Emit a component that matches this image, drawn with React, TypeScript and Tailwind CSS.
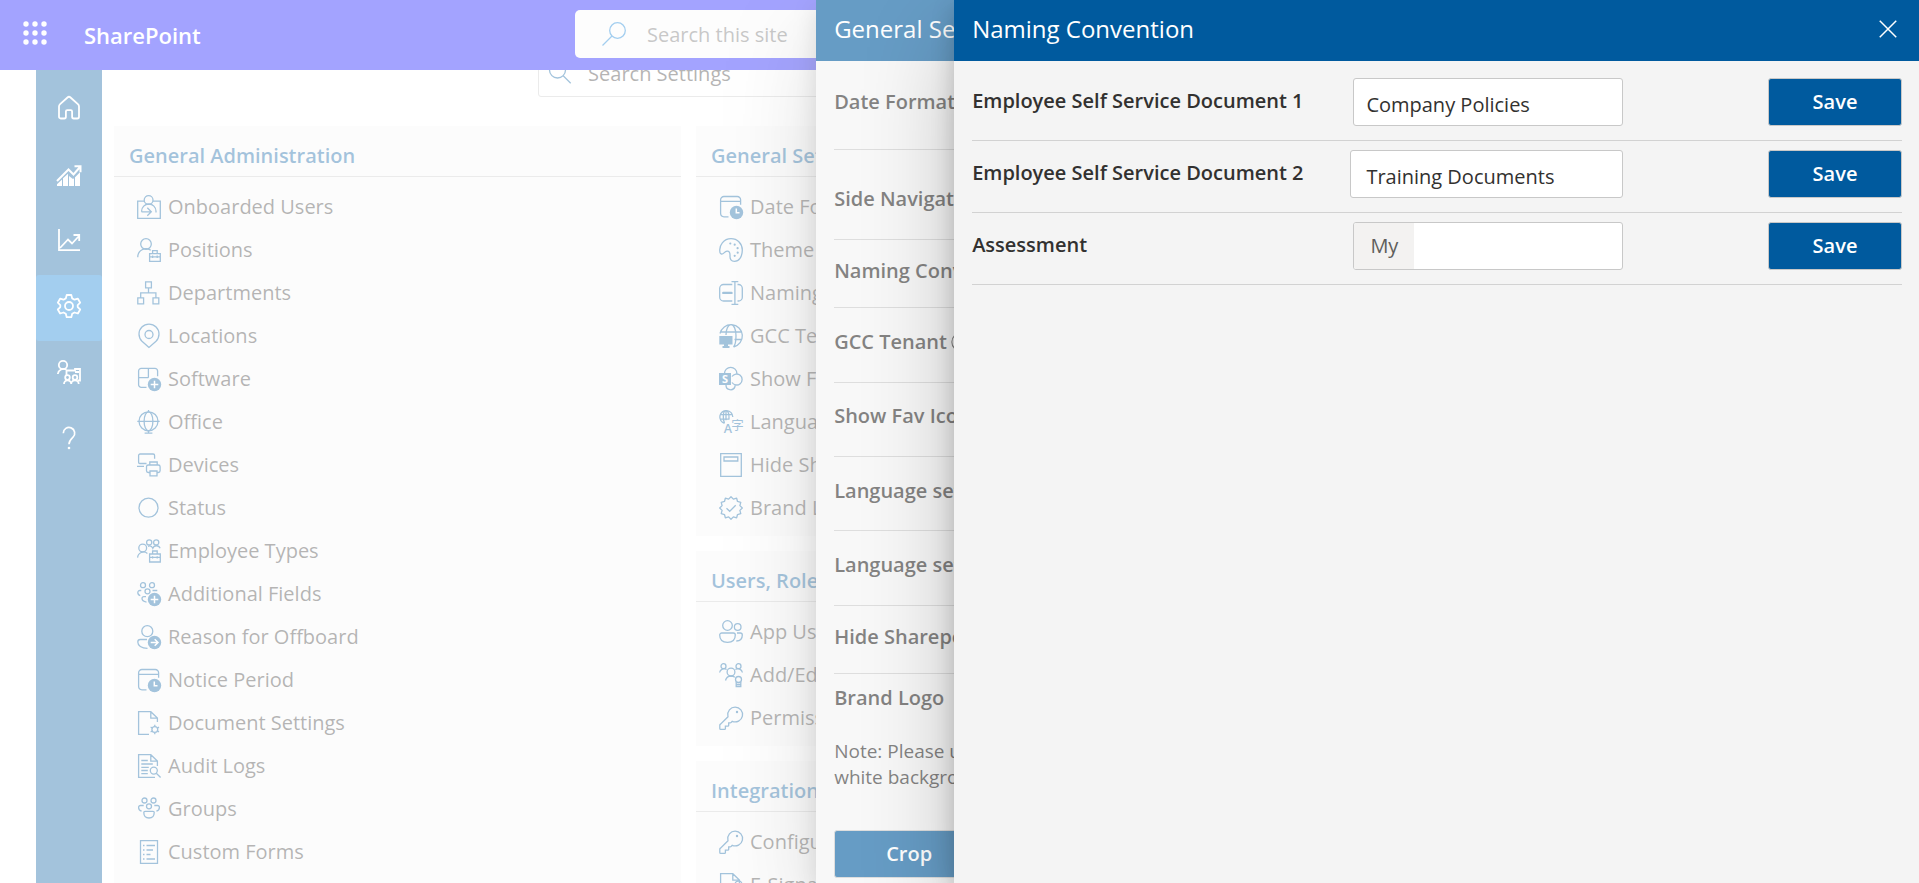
import type { ReactNode } from "react";

type IconProps = { children: ReactNode; className?: string };

function Icon({ children, className = "size-6" }: IconProps) {
  return (
    <svg
      viewBox="0 0 24 24"
      fill="none"
      stroke="currentColor"
      strokeWidth={1.3}
      aria-hidden="true"
      className={`shrink-0 overflow-visible ${className}`}
    >
      {children}
    </svg>
  );
}

function Badge({ children }: { children: ReactNode }) {
  return (
    <>
      <circle cx="17.5" cy="17.5" r="6.7" fill="currentColor" stroke="none" />
      <g stroke="#fff" strokeWidth={1.5}>
        {children}
      </g>
    </>
  );
}

const plusBadge = (
  <Badge>
    <path d="M17.5 13.7v7.6M13.7 17.5h7.6" />
  </Badge>
);

const calendarClock = (
  <>
    <path d="M9.5 21.8H5a3.5 3.5 0 0 1-3.4-3.5V4.8A3.3 3.3 0 0 1 5 1.5h13.3a3.3 3.3 0 0 1 3.3 3.3v5M1.6 6.4h20" />
    <Badge>
      <path d="M17.3 13.6v4.2h3.2" />
    </Badge>
  </>
);

const keyIcon = (
  <>
    <path d="M.8 19.2v3.2c0 .5.4.9.9.9h3.8c.5 0 .9-.4.9-.9v-2.2h2.4c.5 0 .9-.4.9-.9v-2.4h1.5c.3 0 .6-.1.8-.3l1.2-1.3A7.4 7.4 0 1 0 8.9 10c0 .3 0 .5.1.8l-7.8 7.6c-.3.2-.4.5-.4.8z" />
    <circle cx="18" cy="6" r="1.2" fill="currentColor" stroke="none" />
  </>
);

const foldedPage = "M9.5 23.3H1.6V.7h12.2l6.6 6.4v5M13.8.7v6.4h6.6";

const sealPoints = Array.from({ length: 24 }, (_, i) => {
  const radius = i % 2 === 0 ? 11.3 : 9.2;
  const angle = (i * Math.PI) / 12;
  return `${12 + radius * Math.sin(angle)},${12 - radius * Math.cos(angle)}`;
}).join(" ");

const icons = {
  onboarded: (
    <>
      <path d="M7 6.2H.7v17.1h22.6V6.2H16" />
      <circle cx="11.6" cy="5" r="4.4" />
      <path d="M4.6 16.8v-.6a7.2 7.2 0 0 1 14.4 0v1.4M4.5 16.8h9.2M10.3 12.8l4 4-4 4" />
    </>
  ),
  positions: (
    <>
      <circle cx="9" cy="6" r="5.3" />
      <path d="M.8 19.3a8.2 8.2 0 0 1 13-7M12.6 15.6h10.7v7.7H12.6zM15.6 15.4v-2.7h4.6v2.7M12.6 18.8h10.7M15.6 17.6v2.4M20.2 17.6v2.4" />
    </>
  ),
  departments: (
    <path d="M8.6.8h5.8v6H8.6zM.8 16.8h5.8v6H.8zM16 16.8h5.8v6H16zM11.5 6.8v5M3.7 16.8v-5h15.2v5" />
  ),
  locations: (
    <>
      <path d="M12 23.5l-7-6.3a10 10 0 1 1 14 0z" />
      <circle cx="12" cy="10.5" r="4" />
    </>
  ),
  software: (
    <>
      <path d="M9.5 20.3H4.3a2.6 2.6 0 0 1-2.7-2.6V4a2.6 2.6 0 0 1 2.7-2.6H18A2.6 2.6 0 0 1 20.6 4v5.3M11.4 1.4v9.3M1.6 10.7h9.8" />
      {plusBadge}
    </>
  ),
  office: (
    <>
      <circle cx="11.5" cy="11.3" r="9.5" />
      <ellipse cx="11.5" cy="11.3" rx="4.4" ry="9.5" />
      <path d="M.3 11.3h22.4M11.5 0v1.8M11.5 20.8v2.4M7.6 23.2h7.8" />
    </>
  ),
  devices: (
    <>
      <path d="M9.5 10.5H2.8a1.2 1.2 0 0 1-1.2-1.2V2.5a1.5 1.5 0 0 1 1.5-1.5h13a1.5 1.5 0 0 1 1.5 1.5v3.3M0 13.3h7" />
      <path d="M13 19.5h-1.7a1.8 1.8 0 0 1-1.8-1.8v-3.9a1.8 1.8 0 0 1 1.8-1.8h10a1.8 1.8 0 0 1 1.8 1.8v3.9a1.8 1.8 0 0 1-1.8 1.8H20M12.8 12V9h7.4v3M13 18h7v4.8h-7z" />
    </>
  ),
  status: <circle cx="11.5" cy="11.7" r="9.5" />,
  employeeTypes: (
    <>
      <circle cx="5.7" cy="9" r="3.9" />
      <path d="M.6 18.6a6 6 0 0 1 9.8-4.2" />
      <circle cx="12.2" cy="3.4" r="2.6" />
      <circle cx="19.2" cy="3.4" r="2.6" />
      <path d="M11 7.3a3.8 3.8 0 0 1 4.8 2 3.9 3.9 0 0 1 7.3 0M12.6 15h10.7v8H12.6zM15.6 15v-3h4.6v3M12.6 18.4h10.7M15.6 17.2v2.4M20.2 17.2v2.4" />
    </>
  ),
  additionalFields: (
    <>
      <circle cx="6" cy="3.2" r="2.5" />
      <circle cx="15" cy="3.2" r="2.5" />
      <circle cx="10.5" cy="9.3" r="2.5" />
      <path d="M4.3 8.5H2.8A2 2 0 0 0 .8 10.6c0 1.5 1 2.7 2.5 3.1M15.5 8.5h4.8M9 14.6H7a2 2 0 0 0-2 2c0 1.5 1.5 3 4.5 3.5" />
      {plusBadge}
    </>
  ),
  offboard: (
    <>
      <circle cx="10.3" cy="6.2" r="5.5" />
      <path d="M10 14.5H3.3A2.5 2.5 0 0 0 .8 17c0 3.5 3.5 6.3 9.7 6.3" />
      <Badge>
        <path d="M13.7 17.5h7M17.7 14.2l3.3 3.3-3.3 3.3" />
      </Badge>
    </>
  ),
  calendarClock,
  documentSettings: (
    <>
      <path d="M12 23.3H1.6V.7h12.2l6.6 6.4v4M13.8.7v6.4h6.6" />
      <circle cx="17.8" cy="18.5" r="2.9" />
      <path d="M17.8 13.7v1.9M17.8 21.4v1.9M22 16.1l-1.7 1M15.3 20l-1.7 1M22 20.9l-1.7-1M15.3 17l-1.7-1" />
    </>
  ),
  auditLogs: (
    <>
      <path d="M18 23.3H1.6V.7h12.2l6.6 6.4v5M13.8.7v6.4h6.6M4.3 6.5h6.5M4.3 10h11.5M4.3 13.3h7.5M4.3 16.5h6.5M4.3 19.6h6.5" />
      <circle cx="16.8" cy="16.6" r="3.5" />
      <path d="M19.3 19.2l4.3 4.3" />
    </>
  ),
  groups: (
    <>
      <circle cx="7.5" cy="3.5" r="2.5" />
      <circle cx="16.5" cy="3.5" r="2.5" />
      <circle cx="12" cy="9.3" r="2.5" />
      <path d="M6.7 8.5H3.5a1.9 1.9 0 0 0-1.9 1.9c0 1.7 1 3.2 3 3.7M17.3 8.5h3.2a1.9 1.9 0 0 1 1.9 1.9c0 1.7-1 3.2-3 3.7M8 14.3h8a1.2 1.2 0 0 1 1.2 1.2c0 3.3-2 5.5-5.2 5.5s-5.2-2.2-5.2-5.5A1.2 1.2 0 0 1 8 14.3z" />
    </>
  ),
  customForms: (
    <path d="M3.5.7h17v22.6h-17zM6 5.5h1.5M9.5 5.5h8.5M6 10h1.5M9.5 10h6.5M6 14.5h1.5M9.5 14.5h4M6 19h1.5M9.5 19h8.5" />
  ),
  theme: (
    <>
      <path d="M1 14.5C-.5 7 5 .7 12 .7c6.5 0 11.3 5 11.3 11.3 0 7-3.5 11.3-7.8 11.3-3.4 0-4.7-2.3-4.5-5.3.2-3.5-1-5-3-4.8-2.7.3-3.5 3.3-5.5 2.8C1.7 15.8 1.2 15.3 1 14.5z" />
      <g fill="currentColor" stroke="none">
        <circle cx="11.3" cy="5.5" r="1.1" />
        <circle cx="15.7" cy="6.7" r="1.1" />
        <circle cx="18.6" cy="10.2" r="1.1" />
        <circle cx="18.7" cy="14.7" r="1.1" />
        <circle cx="15.7" cy="17.8" r="1.1" />
      </g>
    </>
  ),
  rename: (
    <>
      <path d="M13.3 3.5H4.5A3.8 3.8 0 0 0 .7 7.3v8.9A3.8 3.8 0 0 0 4.5 20h8.8M18.5 3.5h1a3.8 3.8 0 0 1 3.8 3.8v8.9a3.8 3.8 0 0 1-3.8 3.8h-1M12.5.7h6.8M12.5 23.3h6.8M15.9.7v22.6" />
      <path d="M4.3 11.9h8.2" strokeWidth={2.4} strokeLinecap="round" />
    </>
  ),
  tenant: (
    <>
      <path d="M1 9.5A11.3 11.3 0 1 1 14.5 23M1.5 8h20.6M15.5 15.5h7M7 11C7 5.5 9 .7 12 .7s5 4.8 5 11-1 9.5-2.5 11.3" />
      <path d="M.3 12h13.2v8.5H9V22h1.5v2H3.5v-2H5v-1.5H.3z" fill="currentColor" stroke="none" />
    </>
  ),
  sharepoint: (
    <>
      <path d="M5.5 6.5a6.2 6.2 0 0 1 12.4 0v.8M13 9.5a5.5 5.5 0 1 1 0 6M7 18a4.6 4.6 0 0 0 9 1.5v-1.3" />
      <path d="M0 6h12v12H0z" fill="currentColor" stroke="none" />
      <text x="6" y="16" fontSize="11" fontWeight="700" textAnchor="middle" fill="#fff" stroke="none">S</text>
    </>
  ),
  language: (
    <>
      <path d="M5.5 13.3A6.5 6.5 0 1 1 13.8 7M1.2 4.7h12M1.2 9.2h9.3M5.5 13C3.5 9 3.8.7 7 .7c2.2 0 3.3 3.3 3 8.3M7 .7v9.5" />
      <text x="9" y="22.5" fontSize="12.5" fontWeight="600" textAnchor="middle" fill="currentColor" stroke="none">A</text>
      <text x="18.5" y="19.5" fontSize="12.5" textAnchor="middle" fill="currentColor" stroke="none" fontFamily="Noto Sans CJK SC">字</text>
    </>
  ),
  hidePage: <path d="M1.7.7h20.6v22.6H1.7zM5 4h13.8v4H5z" />,
  brand: (
    <>
      <polygon points={sealPoints} strokeLinejoin="round" />
      <path d="M7.5 12.2l3.2 3.1 6-6" />
    </>
  ),
  appUsers: (
    <>
      <circle cx="8.5" cy="5.5" r="4.8" />
      <circle cx="18.7" cy="7" r="3.3" />
      <path d="M2.7 13h11.6a2 2 0 0 1 2 2c0 4.5-3 7.3-7.8 7.3S.7 19.5.7 15a2 2 0 0 1 2-2zM18 13h3.3a2 2 0 0 1 2 2c0 3.7-2 6-6 6" />
    </>
  ),
  addEdit: (
    <>
      <circle cx="4.5" cy="3.2" r="2.5" />
      <circle cx="19.5" cy="3.2" r="2.5" />
      <circle cx="12" cy="9" r="3.9" />
      <path d="M.6 9.5a4.5 4.5 0 0 1 7-3M23.4 9.5a4.5 4.5 0 0 0-7-3M6.5 17.5A6 6 0 0 1 12 13c1.5 0 2.8.4 3.8 1.2" />
      <circle cx="19.5" cy="16.5" r="3" />
      <path d="M17.2 18.8v4.7h4.6v-4.7M17.2 21.5h4.6" />
    </>
  ),
  key: keyIcon,
  esign: (
    <>
      <path d={foldedPage} />
      <circle cx="19.5" cy="11.5" r="3.5" />
    </>
  ),
};

type IconName = keyof typeof icons;
type LinkItem = { icon: IconName; label: string };

const administration: LinkItem[] = [
  { icon: "onboarded", label: "Onboarded Users" },
  { icon: "positions", label: "Positions" },
  { icon: "departments", label: "Departments" },
  { icon: "locations", label: "Locations" },
  { icon: "software", label: "Software" },
  { icon: "office", label: "Office" },
  { icon: "devices", label: "Devices" },
  { icon: "status", label: "Status" },
  { icon: "employeeTypes", label: "Employee Types" },
  { icon: "additionalFields", label: "Additional Fields" },
  { icon: "offboard", label: "Reason for Offboard" },
  { icon: "calendarClock", label: "Notice Period" },
  { icon: "documentSettings", label: "Document Settings" },
  { icon: "auditLogs", label: "Audit Logs" },
  { icon: "groups", label: "Groups" },
  { icon: "customForms", label: "Custom Forms" },
  { icon: "groups", label: "Teams" },
];

const general: LinkItem[] = [
  { icon: "calendarClock", label: "Date Format" },
  { icon: "theme", label: "Theme" },
  { icon: "rename", label: "Naming Convention" },
  { icon: "tenant", label: "GCC Tenant" },
  { icon: "sharepoint", label: "Show Fav Icon" },
  { icon: "language", label: "Language settings" },
  { icon: "hidePage", label: "Hide Sharepoint" },
  { icon: "brand", label: "Brand Logo" },
];

const users: LinkItem[] = [
  { icon: "appUsers", label: "App Users" },
  { icon: "addEdit", label: "Add/Edit Roles" },
  { icon: "key", label: "Permissions" },
];

const integrations: LinkItem[] = [
  { icon: "key", label: "Configuration" },
  { icon: "esign", label: "E-Signature" },
];

function Card({ title, items }: { title: string; items: LinkItem[] }) {
  return (
    <section className="bg-[#f9f9f9] pb-[7px]">
      <h2 className="flex h-[51px] items-center border-b border-[#c8c8c8] px-[15px] pt-[10px] text-[20px] font-semibold text-[#005a9e]">
        {title}
      </h2>
      <ul className="pt-2">
        {items.map((item) => (
          <li key={item.label}>
            <a href="#" className="flex h-[43px] items-center gap-[7px] pl-[23px] text-[20px] text-[#323130]">
              <Icon className="size-6 text-[#005a9e]">{icons[item.icon]}</Icon>
              {item.label}
            </a>
          </li>
        ))}
      </ul>
    </section>
  );
}

const navigation = [
  {
    label: "Home",
    icon: (
      <path
        strokeWidth={1.8}
        strokeLinejoin="round"
        d="M2 10.5c0-1 .4-1.8 1.1-2.4L10.5 1.5a2.2 2.2 0 0 1 3 0l7.4 6.6c.7.6 1.1 1.5 1.1 2.4v10.3c0 1-.8 1.7-1.7 1.7h-3.6c-.9 0-1.6-.8-1.6-1.7v-5.3c0-.8-.6-1.3-1.3-1.3h-3.6c-.7 0-1.3.6-1.3 1.3v5.3c0 1-.7 1.7-1.6 1.7H3.7c-1 0-1.7-.8-1.7-1.7z"
      />
    ),
  },
  {
    label: "Reports",
    icon: (
      <g transform="translate(0 3)">
        <path d="M0 21v-1.8l5-4.7V21zM6 21v-7.7l5-4.5V21zM12 21v-10l4 3 1-.8V21zM18 21v-8.8l5-5V21z" fill="currentColor" stroke="none" />
        <path strokeWidth={2} d="M0 16l11.5-11.5 5 5L23 2M17.5 1.2h6v6" />
      </g>
    ),
  },
  {
    label: "Analytics",
    icon: <path strokeWidth={1.8} d="M2 1v21.2h21M3 20l8-8.5 4 4 7-7.5M16.5 7h5.7v6" />,
  },
  {
    label: "Settings",
    active: true,
    icon: (
      <>
        <path
          strokeWidth={1.8}
          strokeLinejoin="round"
          d="M9.7 1h4.6l.9 3.4 2.3 1.3 3.4-1 2.3 4-2.5 2.4v2l2.5 2.4-2.3 4-3.4-1-2.3 1.3-.9 3.4H9.7l-.9-3.4-2.3-1.3-3.4 1-2.3-4 2.5-2.4v-2L.8 8.7l2.3-4 3.4 1 2.3-1.3z"
        />
        <circle cx="12" cy="12" r="4" strokeWidth={1.8} />
      </>
    ),
  },
  {
    label: "People",
    icon: (
      <g strokeWidth={1.8}>
        <circle cx="6" cy="5" r="4.2" />
        <path d="M.8 14a6 6 0 0 1 8.7-4.5M9.5 10v5M9.5 10.5H18V9h5v11.5h-2M18 12h4" />
        <circle cx="10.5" cy="17.5" r="2.3" />
        <circle cx="18" cy="17.5" r="2.3" />
        <path d="M7 24a3.6 3.6 0 0 1 7.2 0 3.6 3.6 0 0 1 7.5 0" />
      </g>
    ),
  },
  {
    label: "Help",
    icon: (
      <>
        <path strokeWidth={1.7} d="M6.3 7.2a5.7 5.7 0 1 1 9.7 4c-2.5 2.3-4 3.3-4 7" />
        <circle cx="12" cy="22" r="1.3" fill="currentColor" stroke="none" />
      </>
    ),
  },
];

const settings = [
  { label: "Date Format", row: "h-[89px] pb-[6px]" },
  { label: "Side Navigation", row: "h-[90px] pt-[8px]" },
  { label: "Naming Convention", row: "h-[68px] pb-[6px]" },
  { label: "GCC Tenant", row: "h-[75px] pb-[6px]", info: true },
  { label: "Show Fav Icon", row: "h-[74px] pb-[8px]" },
  { label: "Language settings", row: "h-[74px] pb-[6px]" },
  { label: "Language settings for users", row: "h-[75px] pb-[6px]" },
  { label: "Hide Sharepoint", row: "h-[68px] pb-[6px]" },
];

const fieldBox = "h-12 rounded-[3px] border border-[#c8c8c8] bg-white text-[20px]";

const fields = [
  { id: "document-1", label: "Employee Self Service Document 1", value: "Company Policies", box: "w-[29%] pl-3" },
  { id: "document-2", label: "Employee Self Service Document 2", value: "Training Documents", box: "-ml-[3px] w-[calc(29%+3px)] pl-[15px]" },
  { id: "assessment", label: "Assessment", value: "", prefix: "My", box: "w-[29%]" },
];

const panelShadow = "shadow-[0_38px_86px_rgba(0,0,0,0.22),0_7px_22px_rgba(0,0,0,0.18)]";

export default function App() {
  return (
    <div className="relative flex h-screen flex-col overflow-hidden bg-white font-['Open_Sans','Noto_Sans',sans-serif] text-[#323130]">
      <header className="z-10 flex h-[70px] shrink-0 items-center bg-[#0000ff] text-white">
        <button type="button" aria-label="App launcher" className="mb-1 ml-[23px] size-6">
          <svg viewBox="0 0 24 24" fill="currentColor" aria-hidden="true">
            {[3, 12, 21].map((y) => [3, 12, 21].map((x) => <circle key={`${x}-${y}`} cx={x} cy={y} r="2.7" />))}
          </svg>
        </button>
        <a href="#" className="ml-[37px] w-[491px] text-[22px] font-semibold">SharePoint</a>
        <label className="mb-[2px] flex h-12 w-[40%] items-center gap-[21px] rounded-[5px] bg-[#fafafa] pl-[27px]">
          <Icon className="size-6 text-[#0078d4]">
            <circle cx="15.5" cy="8.5" r="7.8" />
            <path d="M10 14L.5 23.5" />
          </Icon>
          <input
            type="search"
            aria-label="Search this site"
            placeholder="Search this site"
            className="w-full bg-transparent pt-[2px] text-[20px] outline-none placeholder:text-[#666666]"
          />
        </label>
      </header>

      <div className="flex min-h-0 flex-1 pl-9">
        <nav aria-label="Main" className="w-[66px] shrink-0 bg-[#005a9e] pt-[7px] text-white">
          {navigation.map((item) => (
            <a
              key={item.label}
              href="#"
              aria-label={item.label}
              className={`flex h-[66px] items-center justify-center rounded-[3px] pb-1 ${item.active ? "bg-[#0078d4]" : ""}`}
            >
              <Icon>{item.icon}</Icon>
            </a>
          ))}
        </nav>

        <main className="flex-1 pr-[74px] pl-3">
          <label className="mx-auto -mt-[21px] mb-[29px] flex h-12 w-[51%] items-center gap-4 rounded-[3px] border border-[#c8c8c8] bg-white pl-[9px]">
            <Icon className="size-6 text-[#005a9e]">
              <circle cx="9.5" cy="9" r="8" />
              <path d="M15.2 14.7l7.5 7.5" />
            </Icon>
            <input
              type="search"
              aria-label="Search Settings"
              placeholder="Search Settings"
              className="w-full bg-transparent pt-[2px] text-[20px] outline-none placeholder:text-[#323130]"
            />
          </label>
          <div className="grid grid-cols-3 items-start gap-[15px]">
            <Card title="General Administration" items={administration} />
            <div className="grid gap-[15px]">
              <Card title="General Settings" items={general} />
              <Card title="Users, Roles & Permissions" items={users} />
              <Card title="Integrations" items={integrations} />
            </div>
          </div>
        </main>
      </div>

      <div className="absolute inset-0 z-20 bg-white/40" />
      <aside aria-label="General Settings" className={`absolute inset-y-0 right-0 z-20 w-[57.47%] bg-[#f4f4f4] ${panelShadow}`}>
        <h2 className="flex h-[61px] items-center bg-[#005a9e] px-[18px] pb-1 text-[24px] text-white">General Settings</h2>
        <div className="px-[18px]">
          {settings.map((item) => (
            <div
              key={item.label}
              className={`flex items-center gap-1 border-b border-[#c8c8c8] text-[20px] font-semibold ${item.row}`}
            >
              {item.label}
              {item.info && (
                <Icon className="size-5">
                  <circle cx="12" cy="12" r="11" />
                  <path d="M12 10v8M12 6v2" />
                </Icon>
              )}
            </div>
          ))}
          <h3 className="mt-[9px] text-[20px] leading-[30px] font-semibold">Brand Logo</h3>
          <p className="mt-[25px] text-[19px] leading-[26px]">
            Note: Please upload a logo with
            <br />
            white background
          </p>
          <button
            type="button"
            className="mt-10 h-12 w-[150px] rounded-[3px] border border-[#c8c8c8] bg-[#005a9e] text-[20px] font-semibold text-white"
          >
            Crop
          </button>
        </div>
      </aside>

      <div className="absolute inset-0 z-30 bg-white/40" />
      <section
        role="dialog"
        aria-label="Naming Convention"
        className={`absolute inset-y-0 right-0 z-30 w-[50.28%] bg-[#f4f4f4] ${panelShadow}`}
      >
        <header className="flex h-[61px] items-center justify-between bg-[#005a9e] pr-[22px] pb-1 pl-[18px] text-white">
          <h1 className="text-[24px]">Naming Convention</h1>
          <button type="button" aria-label="Close">
            <Icon className="size-[18px]">
              <path strokeWidth={2} d="M1 1l22 22M23 1L1 23" />
            </Icon>
          </button>
        </header>
        <form className="pt-2 pr-[17px] pl-[18px]">
          {fields.map((field) => (
            <div key={field.id} className="flex items-center border-b border-[#d2d2d2] pt-[9px] pb-[14px]">
              <label htmlFor={field.id} className="w-[41%] shrink-0 pb-[2px] text-[20px] font-semibold">
                {field.label}
              </label>
              <div className={`flex shrink-0 overflow-hidden ${fieldBox} ${field.box}`}>
                {field.prefix && (
                  <span className="flex items-center bg-[#f3f2f1] px-4 text-[#605e5c]">{field.prefix}</span>
                )}
                <input
                  id={field.id}
                  type="text"
                  defaultValue={field.value}
                  className="w-full min-w-0 bg-transparent pt-[6px] outline-none"
                />
              </div>
              <button
                type="button"
                className="ml-auto h-12 w-[134px] rounded-[3px] border border-[#c8c8c8] bg-[#005a9e] text-[20px] font-semibold text-white"
              >
                Save
              </button>
            </div>
          ))}
        </form>
      </section>
    </div>
  );
}
